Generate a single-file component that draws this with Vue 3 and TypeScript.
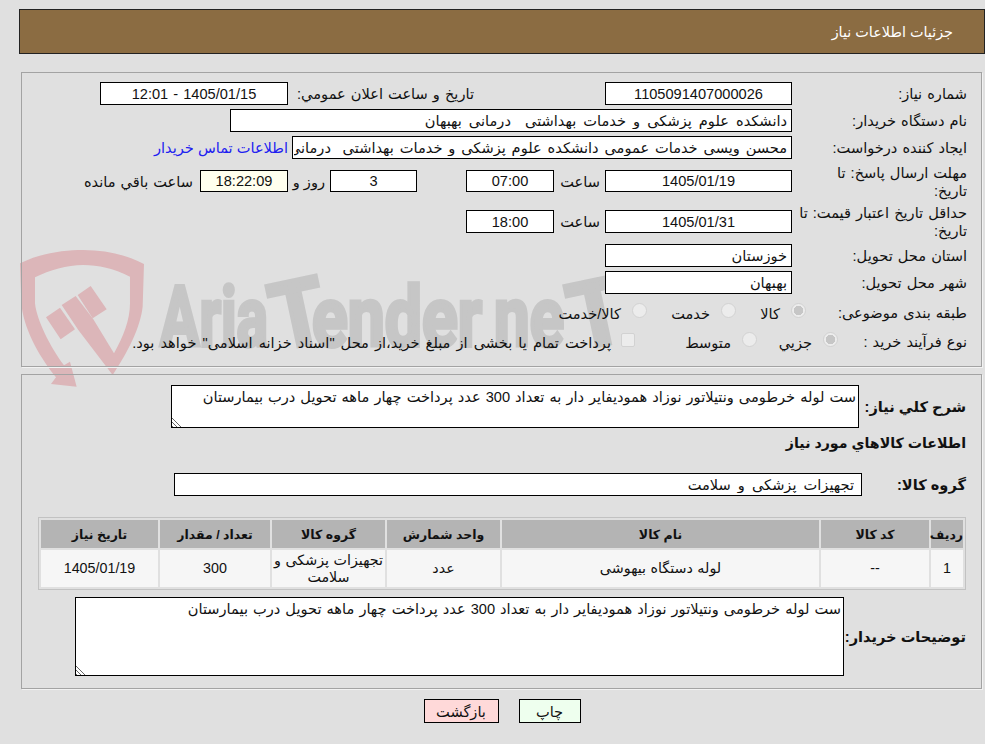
<script setup lang="ts">
const description = 'ست لوله خرطومی ونتیلاتور نوزاد همودیفایر دار به تعداد 300 عدد پرداخت چهار ماهه تحویل درب بیمارستان'
const headers = ['ردیف', 'کد کالا', 'نام کالا', 'واحد شمارش', 'گروه کالا', 'تعداد / مقدار', 'تاریخ نیاز']
const colWidths = [32, 108, 317, 113, 113, 110, 117]
const cells = ['1', '--', 'لوله دستگاه بیهوشی', 'عدد', 'تجهیزات پزشکی و سلامت', '300', '1405/01/19']
</script>

<template>
  <div class="page" dir="rtl">
    <svg class="mark" viewBox="0 0 985 744" width="985" height="744" aria-hidden="true">
      <g transform="translate(20 240) scale(.3333)" fill="#dcb6b9">
        <path d="M0 70 C60 40 130 30 190 30 C260 30 320 45 372 72 L368 200 C362 250 340 310 278 405 L175 270 L125 195 L167 168 L220 238 L282 340 C310 290 330 240 330 190 L330 110 C280 85 235 75 190 75 C140 75 90 90 45 112 L45 190 C50 240 90 320 132 376 L150 365 L170 440 L93 432 L108 412 C50 340 10 260 4 190 Z" />
        <path d="M78 232 L120 203 L165 268 L122 298 Z" />
        <path d="M173 165 L212 138 L260 208 L218 235 Z" />
      </g>
      <g class="mark-text" fill="#c6c6c6" stroke="#c6c6c6" stroke-width="4">
        <text x="160" y="346" font-size="84" textLength="108" lengthAdjust="spacingAndGlyphs" direction="ltr">Aria</text>
        <text x="266" y="346" font-size="92" textLength="54" lengthAdjust="spacingAndGlyphs" direction="ltr" transform="rotate(-12 293 290)">T</text>
        <text x="312" y="346" font-size="84" textLength="170" lengthAdjust="spacingAndGlyphs" direction="ltr">ender</text>
        <text x="494" y="346" font-size="84" textLength="70" lengthAdjust="spacingAndGlyphs" direction="ltr">ne</text>
        <text x="564" y="346" font-size="92" textLength="56" lengthAdjust="spacingAndGlyphs" direction="ltr" transform="rotate(-12 592 290)">T</text>
      </g>
    </svg>

    <header class="title">جزئیات اطلاعات نیاز</header>

    <section class="panel first">
      <div class="row h23">
        <label class="lab">شماره نیاز:</label>
        <input class="box w187 center" readonly value="1105091407000026" />
        <label class="announce">تاریخ و ساعت اعلان عمومي:</label>
        <input class="box w188 center" readonly value="1405/01/15 - 12:01" />
      </div>
      <div class="row h23 mt4">
        <label class="lab">نام دستگاه خریدار:</label>
        <input class="box w562 ws3" readonly value="دانشکده علوم پزشکی و خدمات بهداشتی  درمانی بهبهان" />
      </div>
      <div class="row h23 mt4">
        <label class="lab">ایجاد کننده درخواست:</label>
        <input class="box w500 clip" readonly value="محسن ویسی خدمات عمومی دانشکده علوم پزشکی و خدمات بهداشتی  درمانی بهبهان" />
        <a class="contact">اطلاعات تماس خریدار</a>
      </div>
      <div class="row h34 mt5">
        <label class="lab down">مهلت ارسال پاسخ: تا<br />تاریخ:</label>
        <input class="box w187 h22 center" readonly value="1405/01/19" />
        <span class="hour">ساعت</span>
        <input class="box w88 h22 center" readonly value="07:00" />
        <input class="box w87 h22 center days" readonly value="3" />
        <span class="day">روز و</span>
        <input class="box w88 h22 center remain" readonly value="18:22:09" />
        <span class="unit">ساعت باقي مانده</span>
      </div>
      <div class="row h35 mt6">
        <label class="lab">حداقل تاریخ اعتبار قیمت: تا<br />تاریخ:</label>
        <input class="box w187 center" readonly value="1405/01/31" />
        <span class="hour">ساعت</span>
        <input class="box w88 center" readonly value="18:00" />
      </div>
      <div class="row h23 mt5">
        <label class="lab">استان محل تحویل:</label>
        <input class="box w187" readonly value="خوزستان" />
      </div>
      <div class="row h23 mt4">
        <label class="lab">شهر محل تحویل:</label>
        <input class="box w187" readonly value="بهبهان" />
      </div>
      <div class="row h24 mt7">
        <label class="lab short">طبقه بندی موضوعی:</label>
        <span class="choice c70"><input type="radio" disabled checked />کالا</span>
        <span class="choice c89"><input type="radio" disabled />خدمت</span>
        <span class="choice"><input type="radio" disabled />کالا/خدمت</span>
      </div>
      <div class="row h24 mt5">
        <label class="lab shorter">نوع فرآیند خرید :</label>
        <span class="choice c81"><input type="radio" disabled checked />جزیي</span>
        <span class="choice c122"><input type="radio" disabled />متوسط</span>
        <span class="choice long"><input class="check" type="checkbox" disabled />پرداخت تمام یا بخشی از مبلغ خرید،از محل "اسناد خزانه اسلامی" خواهد بود.</span>
      </div>
    </section>

    <section class="panel second">
      <div class="row desc">
        <label class="strong l122">شرح کلي نياز:</label>
        <textarea class="area a688" readonly :value="description"></textarea>
      </div>
      <h3 class="strong section-title">اطلاعات کالاهاي مورد نياز</h3>
      <div class="row h23 group">
        <label class="strong l119">گروه کالا:</label>
        <input class="box w688 pad ws3" readonly value="تجهیزات پزشکی و سلامت" />
      </div>
      <table class="items">
        <colgroup>
          <col v-for="w in colWidths" :key="w" :style="{ width: w + 'px' }" />
        </colgroup>
        <thead>
          <tr><th v-for="h in headers" :key="h">{{ h }}</th></tr>
        </thead>
        <tbody>
          <tr><td v-for="c in cells" :key="c">{{ c }}</td></tr>
        </tbody>
      </table>
      <div class="row notes">
        <label class="strong l137">توضیحات خریدار:</label>
        <textarea class="area a769" readonly :value="description"></textarea>
      </div>
    </section>

    <div class="actions">
      <button class="btn print" type="button">چاپ</button>
      <button class="btn back" type="button">بازگشت</button>
    </div>
  </div>
</template>

<style>
html, body { margin: 0; background: #e0e0e0; }
</style>

<style scoped>
.page {
  position: relative;
  width: 985px;
  height: 744px;
  overflow: hidden;
  padding-top: 9px;
  box-sizing: border-box;
  background: #e0e0e0;
  color: #111;
  font-family: "Liberation Sans", "DejaVu Sans", sans-serif;
  font-size: 14.6px;
  word-spacing: 1px;
}
.mark { position: absolute; left: 0; top: 0; }
.mark-text text { font-family: Roboto, sans-serif; font-weight: 700; }
.title {
  position: relative;
  box-sizing: border-box;
  height: 45px;
  margin-left: 19px;
  padding-right: 31px;
  display: flex;
  align-items: center;
  background: #8b6c42;
  border: 1px solid #222;
  color: #fff;
  font-size: 14.4px;
  word-spacing: 0;
}
.panel {
  position: relative;
  box-sizing: border-box;
  width: 961px;
  margin-right: 3px;
  border: 1px solid #a3a3a3;
  box-shadow: 1px 1px 0 #f2f2f2;
  padding-right: 14px;
}
.first { height: 295px; margin-top: 18px; padding-top: 9px; }
.second { height: 315px; margin-top: 7px; padding-top: 10px; }
.row { display: flex; align-items: center; }
.h23 { height: 23px; }
.h24 { height: 24px; }
.h34 { height: 34px; }
.h35 { height: 35px; }
.mt4 { margin-top: 4px; }
.mt5 { margin-top: 5px; }
.mt6 { margin-top: 6px; }
.mt7 { margin-top: 7px; }
.lab { width: 175px; flex: none; line-height: 18px; white-space: nowrap; }
.lab.down { padding-top: 2px; }
.lab.short { width: 161px; }
.lab.shorter { width: 129px; }
.box {
  box-sizing: border-box;
  height: 23px;
  flex: none;
  margin: 0;
  padding: 0 4px 0 1px;
  border: 1px solid #000;
  border-radius: 0;
  outline: none;
  background: #fff;
  color: #111;
  font: inherit;
  word-spacing: inherit;
  direction: rtl;
}
.ws3 { word-spacing: 3px; }
.clip { word-spacing: 1.8px; }
.center { text-align: center; padding: 0 2px; }
.h22 { height: 22px; }
.w87 { width: 87px; }
.w88 { width: 88px; }
.w187 { width: 187px; }
.w188 { width: 188px; }
.w500 { width: 500px; }
.w562 { width: 562px; }
.w688 { width: 688px; }
.pad { padding-right: 7px; }
.announce { margin-right: 131px; width: 186px; flex: none; }
.contact { margin-right: 4px; color: #2020f0; white-space: nowrap; word-spacing: 0; }
.hour { width: 51px; flex: none; padding-right: 5px; box-sizing: border-box; }
.days { margin-right: 49px; }
.day { width: 42px; flex: none; padding-right: 5px; box-sizing: border-box; white-space: nowrap; word-spacing: 0; }
.unit { margin-right: 7px; white-space: nowrap; }
.remain { background: #ffffee; }
.choice { display: inline-flex; align-items: center; flex: none; white-space: nowrap; }
.choice.long { word-spacing: 2px; }
.choice input {
  appearance: none;
  box-sizing: border-box;
  width: 15px;
  height: 15px;
  margin: 0 0 5px 11px;
  flex: none;
  border: 1px solid #d2d2d2;
  border-radius: 50%;
  background: #ececec;
}
.choice input:checked { background: radial-gradient(circle, #c6c6c6 0 4.5px, #ececec 5px); }
.choice input.check { width: 14px; height: 14px; margin-left: 10px; border-radius: 2px; }
.c70 { width: 70px; }
.c81 { width: 81px; }
.c89 { width: 89px; }
.c122 { width: 122px; }
.strong { font-weight: 700; flex: none; word-spacing: 0; box-sizing: border-box; padding-right: 1px; }
.l122 { width: 108px; }
.l119 { width: 105px; }
.l137 { width: 123px; }
.area {
  box-sizing: border-box;
  flex: none;
  margin: 0;
  padding: 2px;
  border: 1px solid #000;
  border-radius: 0;
  outline: none;
  background: #fff;
  color: #111;
  font: inherit;
  word-spacing: inherit;
  direction: rtl;
}
.area::-webkit-resizer {
  background:
    linear-gradient(45deg, transparent 0 58%, #fff 58%) 0 100% / 10px 10px no-repeat,
    repeating-linear-gradient(45deg, #666 0 1px, #fff 1px 3px) 0 100% / 10px 10px no-repeat;
}
.a688 { width: 688px; height: 43px; }
.a769 { width: 769px; height: 79px; }
.desc { height: 43px; }
.section-title { margin: 0; height: 18px; line-height: 18px; margin-top: 6px; font-size: 14.2px; }
.group { margin-top: 21px; }
.items {
  box-sizing: border-box;
  width: 928px;
  margin: 21px 1px 0 0;
  table-layout: fixed;
  border-collapse: separate;
  border-spacing: 2px;
  border: 1px solid #c2c2c2;
  font-size: 14.3px;
  word-spacing: 0.5px;
}
.items th {
  height: 28px;
  padding: 0;
  background: #b4b4b4;
  font-size: 12.5px;
  font-weight: 700;
  word-spacing: 0;
}
.items td {
  height: 37px;
  padding: 0;
  background: #f6f6f6;
  text-align: center;
  line-height: 17px;
}
.notes { margin-top: 7px; height: 79px; }
.actions { position: relative; display: flex; justify-content: center; gap: 20px; margin: 10px 0 0 19px; }
.btn {
  box-sizing: border-box;
  height: 24px;
  margin: 0;
  padding: 0;
  border: 1px solid #000;
  border-radius: 0;
  color: #111;
  font: inherit;
  word-spacing: inherit;
}
.print { width: 62px; background: #eeffee; }
.back { width: 75px; background: #ffd9d9; }
</style>
